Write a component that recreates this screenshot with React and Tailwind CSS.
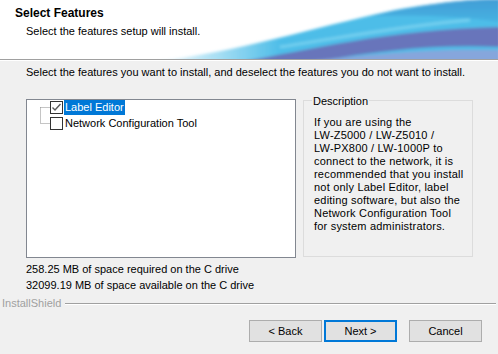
const font = { fontFamily: '"Liberation Sans", Arial, sans-serif' };

const Swoosh = () => (
  <svg className="absolute inset-0" width="498" height="59" viewBox="0 0 498 59">
    <defs>
      <linearGradient id="fadeIn" x1="150" y1="0" x2="280" y2="0" gradientUnits="userSpaceOnUse">
        <stop offset="0" stopColor="#5ec3ea" stopOpacity="0" />
        <stop offset="1" stopColor="#4dbde8" stopOpacity="1" />
      </linearGradient>
      <linearGradient id="topBlue" x1="0" y1="0" x2="0" y2="30" gradientUnits="userSpaceOnUse">
        <stop offset="0" stopColor="#3f98d3" />
        <stop offset="1" stopColor="#47b8e6" />
      </linearGradient>
      <filter id="soft" x="-10%" y="-20%" width="120%" height="140%">
        <feGaussianBlur stdDeviation="1.6" />
      </filter>
    </defs>
    <g filter="url(#soft)">
      <path d="M150,62 C240,52 310,28 395,10 C440,2 475,-1 500,-1 L500,62 Z" fill="url(#fadeIn)" />
      <path d="M370,16 C420,5 460,-1 500,-1 L500,22 C460,16 420,15 370,16 Z" fill="url(#topBlue)" opacity="0.85" />
      <path d="M240,62 C310,50 385,30 500,27 L500,47 C440,44 380,50 315,62 Z" fill="#6b6db6" opacity="0.9" />
      <path d="M300,62 C360,56 420,48 500,50 L500,62 Z" fill="#86a6dc" />
      <path d="M280,47 C340,38 400,26 470,20" stroke="#8fdcf4" strokeWidth="3" fill="none" opacity="0.6" />
    </g>
  </svg>
);

const Checkbox = ({ checked }) => (
  <div className="w-[13px] h-[13px] border border-[#333333] bg-white flex items-center justify-center shrink-0 mt-[1px]">
    {checked && (
      <svg width="11" height="11" viewBox="0 0 11 11">
        <path d="M1.5,5.5 L4,8 L9.5,2" stroke="#5a5a5a" strokeWidth="1.4" fill="none" />
      </svg>
    )}
  </div>
);

const descLines = [
  "If you are using the",
  "LW-Z5000 / LW-Z5010 /",
  "LW-PX800 / LW-1000P to",
  "connect to the network, it is",
  "recommended that you install",
  "not only Label Editor, label",
  "editing software, but also the",
  "Network Configuration Tool",
  "for system administrators.",
];

export default function App() {
  return (
    <div className="w-[498px] h-[354px] bg-[#f0f0f0] text-black text-[11px] leading-[13px] overflow-hidden" style={font}>
      {/* Header banner */}
      <div className="relative h-[60px] bg-white border-b border-[#a0a0a0]">
        <Swoosh />
        <div className="relative pl-[15px] pt-[6px] text-[12px] leading-[14px] font-bold">Select Features</div>
        <div className="relative pl-[26px] mt-[5px]">Select the features setup will install.</div>
      </div>
      <div className="h-px bg-white" />

      <div className="pl-[26px]">
        <div className="mt-[5px]">
          Select the features you want to install, and deselect the features you do not want to install.
        </div>

        <div className="flex items-start mt-[20px]">
          {/* Feature tree */}
          <div className="relative w-[270px] h-[159px] bg-white border border-[#828790]">
            <svg className="absolute left-[13px] top-[7px]" width="12" height="18" viewBox="0 0 12 18">
              <path d="M0.5,0.5 L10,0.5 M0.5,0.5 L0.5,16.5 M0.5,16.5 L10,16.5" stroke="#8a8a8a" strokeWidth="1" strokeDasharray="1 1" fill="none" />
            </svg>
            <div className="pl-[23px]">
              <div className="flex items-start h-[16px]">
                <Checkbox checked />
                <span className="ml-px bg-[#0078d7] text-white px-[1px] h-[15px] leading-[15px]">Label Editor</span>
              </div>
              <div className="flex items-start h-[16px]">
                <Checkbox />
                <span className="ml-px px-[1px] leading-[15px]">Network Configuration Tool</span>
              </div>
            </div>
          </div>

          {/* Description group */}
          <div className="relative ml-[7px] mt-px w-[170px] h-[157px] border border-[#dcdcdc]">
            <div className="absolute left-[8px] top-[-5px] bg-[#f0f0f0] px-px leading-[11px]">Description</div>
            <div className="pl-[10px] pt-[15px] tracking-[0.2px]">
              {descLines.map((l) => (
                <div key={l} className="whitespace-nowrap">{l}</div>
              ))}
            </div>
          </div>
        </div>

        <div className="mt-[5px]">258.25 MB of space required on the C drive</div>
        <div className="mt-[3px]">32099.19 MB of space available on the C drive</div>
      </div>

      {/* InstallShield divider */}
      <div className="flex items-center mt-[5px] pl-[2px] pr-[2px]">
        <span className="text-[#a0a0a0]">InstallShield</span>
        <div className="flex-1 ml-[4px] border-t border-[#a0a0a0] border-b border-b-white" />
      </div>

      {/* Buttons */}
      <div className="flex justify-end pr-[16px] mt-[10px]">
        <button className="w-[73px] h-[22px] bg-[#e1e1e1] border border-[#adadad] text-[11px]">&lt; Back</button>
        <button className="ml-[2px] w-[73px] h-[22px] bg-[#e1e1e1] border-2 border-[#0078d7] text-[11px]">Next &gt;</button>
        <button className="ml-[12px] w-[73px] h-[22px] bg-[#e1e1e1] border border-[#adadad] text-[11px]">Cancel</button>
      </div>
    </div>
  );
}
